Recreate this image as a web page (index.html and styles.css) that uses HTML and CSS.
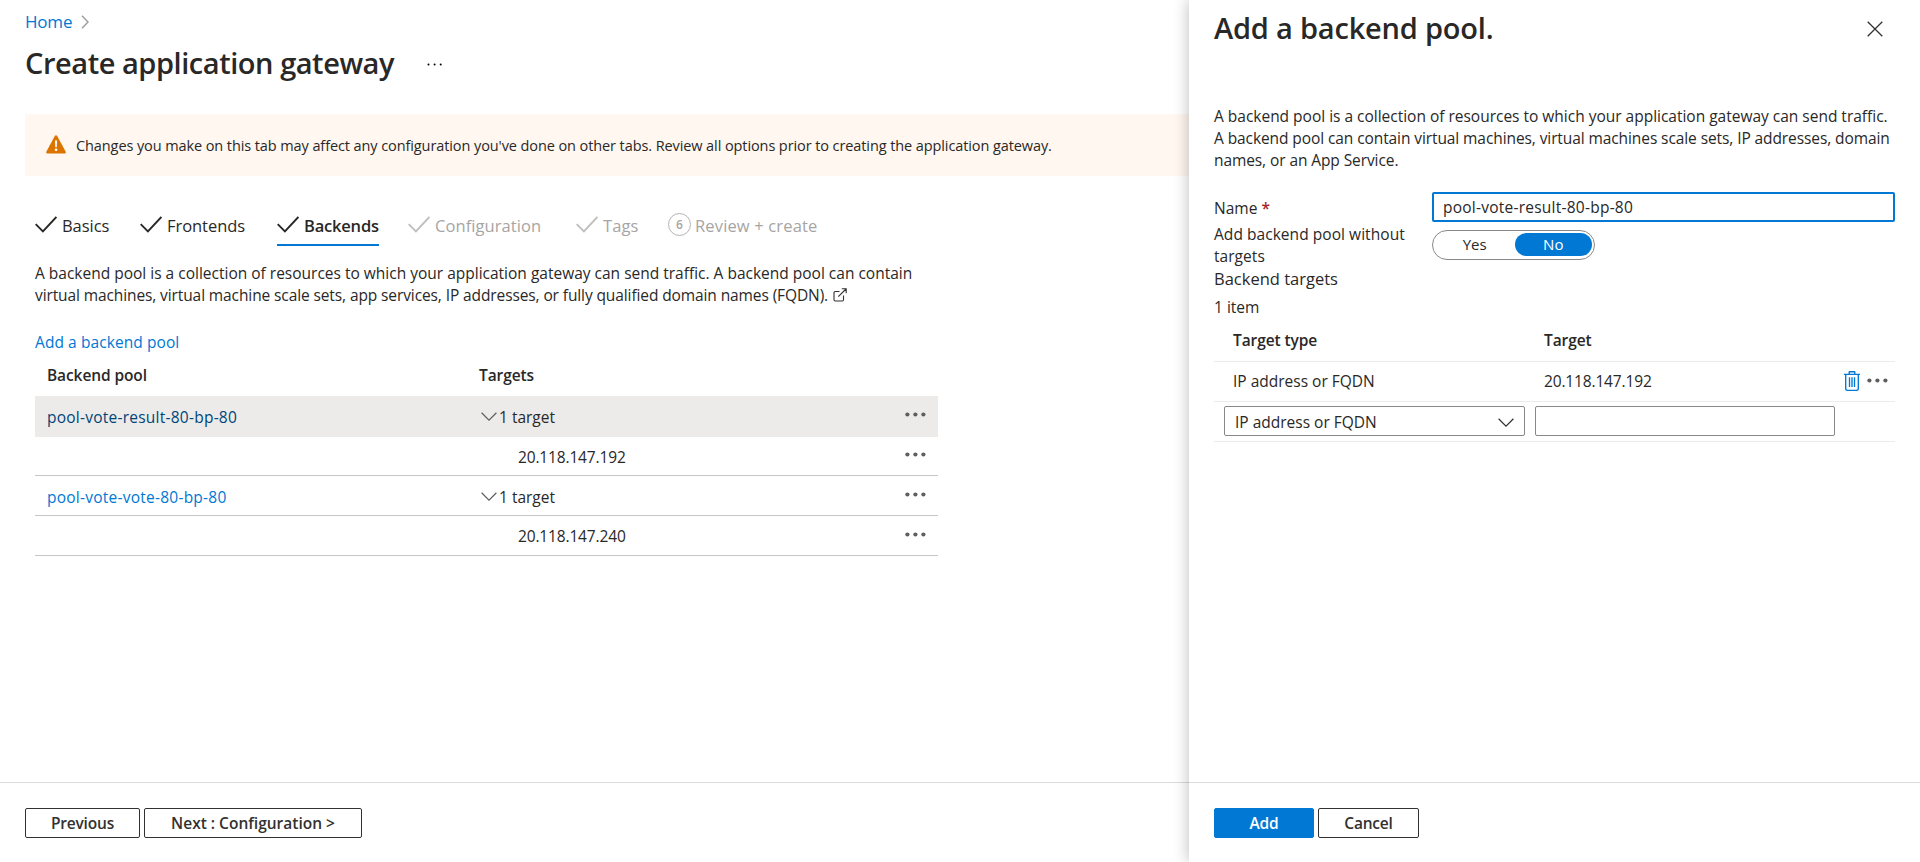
FILE: index.html
```html
<!DOCTYPE html>
<html lang="en">
<head>
<meta charset="utf-8">
<title>Create application gateway</title>
<link rel="stylesheet" href="styles.css">
</head>
<body>
<svg class="defs" aria-hidden="true">
  <symbol id="check" viewBox="0 0 22 17"><path d="M.7 8.2 7.9 15.4 21.4 1" fill="none" stroke="currentColor" stroke-width="1.9"/></symbol>
  <symbol id="chevron" viewBox="0 0 16 9"><path d="M.6.8 8 8.1 15.4.8" fill="none" stroke="currentColor" stroke-width="1.2"/></symbol>
  <symbol id="dots" viewBox="0 0 21 5"><circle cx="2.4" cy="2.5" r="2.1"/><circle cx="10.4" cy="2.5" r="2.1"/><circle cx="18.4" cy="2.5" r="2.1"/></symbol>
</svg>
<div class="app">
  <main class="main">
    <nav class="crumbs"><a class="link">Home</a>
      <svg class="crumb-arrow" viewBox="0 0 8 14"><path d="M1 .8 7 7 1 13.2" fill="none" stroke="#a19f9d" stroke-width="1.5"/></svg>
    </nav>
    <header class="title-row">
      <h1 class="title">Create application gateway</h1>
      <svg class="title-more" viewBox="0 0 16 3"><circle cx="1.5" cy="1.5" r="1"/><circle cx="7.6" cy="1.5" r="1"/><circle cx="13.7" cy="1.5" r="1"/></svg>
    </header>
    <div class="banner">
      <svg class="warn" viewBox="0 0 20 19"><path d="M8.8 1.1Q10-.6 11.2 1.1L19.7 16.7Q20.2 18.4 18.6 18.5H1.4Q-.2 18.4.3 16.7Z" fill="#db7500"/><path d="M9 5.6h2.1l-.3 6.7H9.3z" fill="#fff"/><circle cx="10.05" cy="14.8" r="1.3" fill="#fff"/></svg>
      <span class="banner-text">Changes you make on this tab may affect any configuration you've done on other tabs. Review all options prior to creating the application gateway.</span>
    </div>
    <div class="tabs">
      <div class="tab"><svg class="check"><use href="#check"/></svg>Basics</div>
      <div class="tab"><svg class="check"><use href="#check"/></svg>Frontends</div>
      <div class="tab active"><svg class="check"><use href="#check"/></svg>Backends</div>
      <div class="tab off"><svg class="check"><use href="#check"/></svg>Configuration</div>
      <div class="tab off"><svg class="check"><use href="#check"/></svg>Tags</div>
      <div class="tab off review"><span class="step">6</span>Review + create</div>
    </div>
    <p class="intro">A backend pool is a collection of resources to which your application gateway can send traffic. A backend pool can contain<br><span class="tight">virtual machines, virtual machine scale sets, app services, IP addresses, or fully qualified domain names (FQDN).</span><svg class="ext" viewBox="0 0 14 14"><path d="M6.5 3.5H2.2Q1 3.5 1 4.7V11.8Q1 13 2.2 13H9.3Q10.5 13 10.5 11.8V7.5M5.3 8.7 13 1M8.8.8H13.2V5.2" fill="none" stroke="#323130" stroke-width="1.1"/></svg></p>
    <a class="link add">Add a backend pool</a>
    <div class="table">
      <div class="thead"><span>Backend pool</span><span>Targets</span></div>
      <div class="row selected"><a class="link visited">pool-vote-result-80-bp-80</a><span class="targets"><svg class="chev"><use href="#chevron"/></svg>1 target</span><svg class="dots"><use href="#dots"/></svg></div>
      <div class="row first-ip"><span></span><span class="ip">20.118.147.192</span><svg class="dots"><use href="#dots"/></svg></div>
      <div class="row"><a class="link">pool-vote-vote-80-bp-80</a><span class="targets"><svg class="chev"><use href="#chevron"/></svg>1 target</span><svg class="dots"><use href="#dots"/></svg></div>
      <div class="row last"><span></span><span class="ip">20.118.147.240</span><svg class="dots"><use href="#dots"/></svg></div>
    </div>
    <footer class="footer"><button class="btn prev">Previous</button><button class="btn next">Next : Configuration &gt;</button></footer>
  </main>
  <aside class="panel">
    <header class="panel-head">
      <h2 class="title panel-title">Add a backend pool.</h2>
      <svg class="close" viewBox="0 0 16 16"><path d="M.7.7 15.3 15.3M15.3.7.7 15.3" stroke="#323130" stroke-width="1.3"/></svg>
    </header>
    <p class="panel-text"><span class="wide">A backend pool is a collection of resources to which your application gateway can send traffic.</span><br>A backend pool can contain virtual machines, virtual machines scale sets, IP addresses, domain<br>names, or an App Service.</p>
    <div class="field name-field"><label>Name <span class="req">*</span></label><div class="input focus">pool-vote-result-80-bp-80</div></div>
    <div class="field toggle-field"><label>Add backend pool without<br>targets</label><div class="toggle"><span>Yes</span><span class="on">No</span></div></div>
    <div class="section">Backend targets</div>
    <div class="count">1 item</div>
    <div class="grid">
      <div class="grow ghead"><span>Target type</span><span>Target</span></div>
      <div class="grow"><span>IP address or FQDN</span><span class="ipt">20.118.147.192</span>
        <span class="actions"><svg class="trash" viewBox="0 0 16 20"><path d="M0 3.3H16M5.2 3V1.1Q5.2.7 5.6.7H10.4Q10.8.7 10.8 1.1V3M1.7 3.5V17.8Q1.7 19.3 3.2 19.3H12.8Q14.3 19.3 14.3 17.8V3.5M5.5 6.3V16M8 6.3V16M10.5 6.3V16" fill="none" stroke="#0078d4" stroke-width="1.35"/></svg><svg class="dots"><use href="#dots"/></svg></span></div>
      <div class="grow edit"><div class="input select">IP address or FQDN<svg class="chev"><use href="#chevron"/></svg></div><div class="input"></div></div>
    </div>
    <footer class="footer"><button class="btn primary">Add</button><button class="btn cancel">Cancel</button></footer>
  </aside>
</div>
</body>
</html>
```
FILE: styles.css
```css
* { box-sizing: border-box; }
body { margin: 0; background: #fff; color: #292827; font: 15.5px/22px "Open Sans", "Noto Sans", sans-serif; white-space: nowrap; overflow: hidden; }
h1, h2, p { margin: 0; }
svg { display: block; flex: none; }
.defs { position: absolute; width: 0; height: 0; }
.app { display: grid; grid-template-columns: 1189px 1fr; height: 862px; }
.main, .panel { display: flex; flex-direction: column; min-width: 0; height: 862px; }
.link { color: #0078d4; text-decoration: none; letter-spacing: .24px; }

.crumbs { display: flex; align-items: center; gap: 9px; height: 43px; padding-left: 25px; font-size: 17px; }
.crumbs .link { letter-spacing: -.2px; }
.crumb-arrow { width: 8px; height: 14px; margin-top: 1px; }
.title-row { display: flex; align-items: center; height: 40px; padding-left: 25px; }
.title { font-size: 29px; line-height: 40px; font-weight: 600; letter-spacing: -.45px; width: 402px; }
.title-more { width: 16px; height: 3px; margin-top: 2px; }
.banner { display: flex; align-items: center; gap: 10px; height: 62px; margin: 31px 0 0 25px; padding-left: 21px; border-radius: 2px 0 0 2px; background: #fff7f0; font-size: 14.5px; letter-spacing: -.093px; }
.banner-text { padding-top: 1px; }
.warn { width: 20px; height: 19px; margin-top: -2px; }

.tabs { display: grid; grid-template-columns: 105px 137px 131px 168px 92px auto; margin: 30px 0 0 35px; height: 40px; font-size: 16.5px; }
.tab { display: flex; gap: 5px; height: 40px; line-height: 40px; justify-self: start; letter-spacing: -.05px; }
.check { width: 22px; height: 17px; margin-top: 10px; }
.active { width: 102px; border-bottom: 2px solid #0078d4; font-weight: 600; letter-spacing: -.2px; }
.off { color: #a6a5a4; letter-spacing: .08px; }
.review { letter-spacing: .15px; }
.off .check { color: #c0bfbe; }
.step { display: grid; place-items: center; width: 23px; height: 23px; margin: 7px -1px 0 0; border: 1.5px solid #b5b4b3; border-radius: 50%; font-size: 12px; line-height: 20px; font-weight: 600; }

.intro { margin: 16px 0 0 35px; }
.tight { letter-spacing: -.105px; }
.ext { display: inline-block; width: 14px; height: 14px; margin-left: 5px; vertical-align: -1px; }
.add { margin: 25px 0 0 35px; height: 22px; letter-spacing: .08px; }

.table { width: 903px; margin: 6px 0 0 35px; }
.thead { display: grid; grid-template-columns: 432px auto; height: 37px; padding: 5px 0 0 12px; font-weight: 600; letter-spacing: -.1px; }
.row { display: grid; grid-template-columns: 432px 1fr 21px; height: 40px; padding: 10px 12px 0; border-bottom: 1px solid #c8c6c4; }
.selected { height: 41px; padding-top: 10px; border: 0; background: #ecebea; }
.first-ip { height: 39px; padding-top: 9px; }
.last { padding-top: 9px; }
.visited { color: #004578; }
.targets { display: flex; gap: 2px; padding-left: 2px; }
.chev { width: 16px; height: 9px; margin-top: 6px; color: #605e5c; }
.ip { padding-left: 39px; letter-spacing: -.15px; }
.dots { width: 21px; height: 5px; margin-top: 6px; fill: #605e5c; }
.last .dots { margin-top: 7px; }

.footer { display: flex; gap: 4px; height: 80px; margin-top: auto; padding: 25px 0 0 25px; border-top: 1px solid #dcdbda; }
.btn { height: 30px; padding: 0; border: 1.4px solid #323130; border-radius: 2px; background: #fff; color: #323130; font: 600 15.5px/27px "Open Sans", "Noto Sans", sans-serif; letter-spacing: -.2px; }
.prev { width: 115px; }
.next { width: 218px; letter-spacing: 0; }
.primary { width: 100px; border-color: #0078d4; background: #0078d4; color: #fff; }
.cancel { width: 101px; }

.panel { position: relative; background: #fff; box-shadow: -1px 0 14px rgba(0, 0, 0, .24); }
.panel-head { display: flex; justify-content: space-between; height: 105px; padding: 8px 37px 0 25px; }
.panel-title { letter-spacing: -.2px; width: auto; }
.close { width: 16px; height: 16px; margin-top: 13px; }
.panel-text { padding-left: 25px; letter-spacing: -.09px; }
.wide { letter-spacing: -.01px; }
.field { display: grid; grid-template-columns: 218px 463px; padding-left: 25px; }
.name-field { margin-top: 21px; height: 31px; }
.name-field label { padding-top: 5px; }
.req { color: #a4262c; font-weight: 600; }
.input { height: 30px; border: 1px solid #8a8886; border-radius: 2px; padding-left: 10px; line-height: 30px; }
.focus { border: 2px solid #0078d4; padding-left: 9px; line-height: 27px; letter-spacing: .24px; }
.toggle-field { height: 44px; letter-spacing: .05px; }
.toggle { display: flex; width: 163px; height: 30px; margin-top: 7px; padding: 2px; border: 1px solid #8a8886; border-radius: 15px; text-align: center; line-height: 22px; font-size: 15px; }
.toggle span { width: 80px; height: 23px; }
.toggle .on { width: 78px; border-radius: 11.5px; background: #0078d4; color: #fff; }
.section { padding-left: 25px; font-size: 16.5px; line-height: 24px; }
.count { padding: 5px 0 0 25px; }
.grid { width: 681px; margin: 0 0 0 25px; }
.grow { display: grid; grid-template-columns: 311px 300px 1fr; height: 40px; padding: 8px 9px 0 19px; border-bottom: 1px solid #edebe9; }
.ghead { height: 44px; padding-top: 11px; font-weight: 600; letter-spacing: -.1px; }
.ipt { letter-spacing: -.15px; }
.actions { display: flex; gap: 7px; padding-top: 1px; }
.trash { width: 16px; height: 20px; }
.actions .dots { margin-top: 7px; }
.edit { grid-template-columns: 301px 300px; column-gap: 10px; padding: 4px 0 0 10px; }
.select { display: flex; justify-content: space-between; padding-right: 10px; }
.select .chev { margin-top: 11px; color: #323130; }
```
